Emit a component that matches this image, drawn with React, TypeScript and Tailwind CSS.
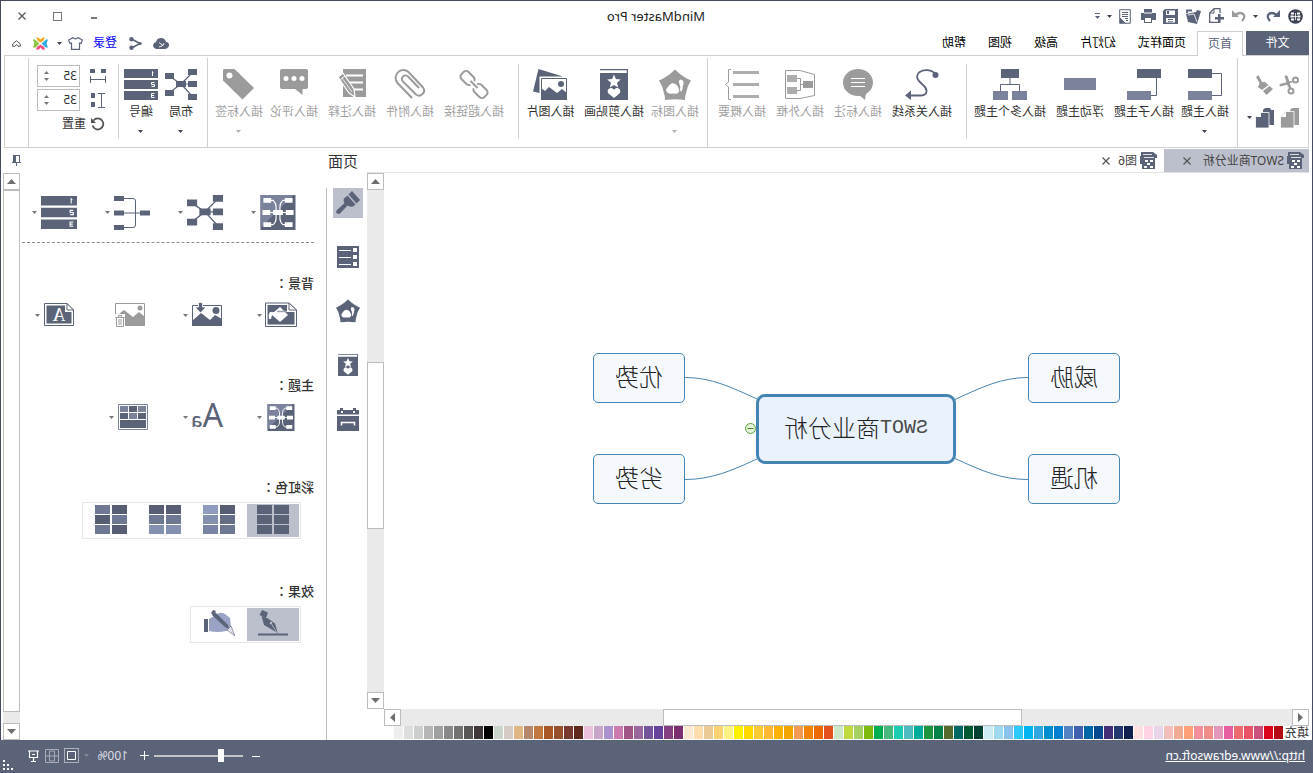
import React from "react";

const D = "#5b6378";
const M = "#7b829b";
const G = "#9b9b9b";

type IconProps = { w: number; h: number; children: React.ReactNode };

function Icon({ w, h, children }: IconProps) {
  return (
    <svg width={w} height={h} viewBox={`0 0 ${w} ${h}`} fill="none" className="shrink-0" aria-hidden="true">
      {children}
    </svg>
  );
}

function Caret({ color = "#3d4254", up = false }: { color?: string; up?: boolean }) {
  return (
    <Icon w={5} h={3}>
      <path d={up ? "M0 3L2.5 0L5 3Z" : "M0 0H5L2.5 3Z"} fill={color} />
    </Icon>
  );
}

/* ---------- ribbon drawings ---------- */

const TopicIcon = () => (
  <Icon w={34} h={31}>
    <path d="M10 4.5H.5V26.5H10" stroke={D} />
    <path d="M10 0h24v9H10z" fill={D} />
    <path d="M10 22h24v9H10z" fill={M} />
  </Icon>
);
const SubtopicIcon = () => (
  <Icon w={34} h={31}>
    <path d="M4.5 9V26.5H10" stroke={D} />
    <path d="M0 0h24v9H0z" fill={D} />
    <path d="M10 22h24v9H10z" fill={M} />
  </Icon>
);
const FloatingIcon = () => (
  <Icon w={32} h={31}>
    <path d="M0 9h32v12H0z" fill={M} />
  </Icon>
);
const MultiIcon = () => (
  <Icon w={34} h={31}>
    <path d="M17 9V15.5M7.5 22V15.5H26.5V22" stroke={D} />
    <path d="M8 0h18v9H8z" fill={D} />
    <path d="M0 22h15v9H0zM19 22h15v9H19z" fill={M} />
  </Icon>
);
const RelationIcon = () => (
  <Icon w={34} h={31}>
    <path d="M3 6C7 0 16 0 20 3.500C25 9 19 13 16 16C11 20 11 26 18 26.500H29" stroke={D} strokeWidth="1.800" />
    <circle cx="3.500" cy="6" r="3" fill={D} />
    <path d="M34 26.500L28 21.500V31Z" fill={D} />
  </Icon>
);
const CalloutIcon = () => (
  <Icon w={30} h={31}>
    <ellipse cx="15" cy="13.500" rx="15" ry="13.500" fill={G} />
    <path d="M7 24L8 31L15 25Z" fill={G} />
    <path d="M8 9.500H22M8 13.500H22M8 17.500H22" stroke="#fff" />
  </Icon>
);
const BoundaryIcon = () => (
  <Icon w={30} h={31}>
    <path d="M29.500 1.500H15L.5 5.500V26.500L15 29.500H29.500Z" stroke={G} />
    <path d="M12 15.500H15M18 9.500H14.500V21.500H18" stroke={G} />
    <path d="M2 12h10v7H2z" fill={G} />
    <path d="M18 6h10v7H18zM18 18h10v7H18z" fill="#adadad" />
  </Icon>
);
const SummaryIcon = () => (
  <Icon w={34} h={31}>
    <path d="M0 2h26v3H0zM0 14h26v3H0zM0 26h26v3H0z" fill="#adadad" />
    <path d="M28 .5H30.500V13L33.500 15.500L30.500 18V30.500H28" stroke={G} />
  </Icon>
);
function Badge({ size, color }: { size: number; color: string }) {
  return (
    <svg width={size} height={size} viewBox="0 0 32 31" fill="none" aria-hidden="true">
      <path d="M16 0L21 4.500Q26 8.500 32 11Q28.500 16 27.500 22Q26 26 26 30.500Q16 29 6 30.500Q6 26 4.500 22Q3.500 16 0 11Q6 8.500 11 4.500Z" fill={color} />
      <path d="M17 14C21 13 23 18 25 20C25 23 22 25 18 24C14 25 11 23 12 20C13 17 13 15 17 14Z" fill="#fff" />
      <path d="M10 10C13 10 12 14 11 16C10 18 12 21 10 22C7 21 9 17 8 16C7 14 7 11 10 10Z" fill="#fff" />
      <path d="M12 17L15 13M6 23L9 20" stroke={color} strokeWidth="1.500" />
    </svg>
  );
}
function Clipart({ w, h }: { w: number; h: number }) {
  return (
    <svg width={w} height={h} viewBox="0 0 28 31" fill="none" aria-hidden="true">
      <path d="M0 0H28V1.200H1.200V4H28V31H0Z" fill={D} />
      <path d="M14 5.500L15.900 10.100L20.800 10.500L17 13.700L18.200 18.500L14 15.900L9.800 18.500L11 13.700L7.200 10.500L12.100 10.100Z" fill="#fff" />
      <path d="M14 29L8.500 24.500C6.500 22 8.500 19 11 19C12.500 19 13.500 20 14 21C14.500 20 15.500 19 17 19C19.500 19 21.500 22 19.500 24.500Z" fill="#fff" />
    </svg>
  );
}
const PictureIcon = () => (
  <Icon w={34} h={31}>
    <path d="M28.500 0L4 7.500H27.500V24L34 22.500Z" fill={D} />
    <path d="M.5 9.500H25.500V30.500H.5Z" fill="#fff" stroke={D} />
    <circle cx="6" cy="15" r="3" fill={D} />
    <path d="M0 31V24L5 20L10 24L18 18L22 22L26 19V31Z" fill={D} />
  </Icon>
);
const LinkIcon = () => (
  <Icon w={30} h={31}>
    <g stroke={G} strokeWidth="2">
      <rect x="14.500" y="4" width="14" height="10" rx="3.500" transform="rotate(-45 21.500 9)" />
      <rect x="1.500" y="17" width="14" height="10" rx="3.500" transform="rotate(-45 8.500 22)" />
    </g>
    <path d="M11.500 19.500L18.500 12" stroke="#fff" strokeWidth="5" />
    <path d="M11.500 19L18.500 12" stroke={G} strokeWidth="2" />
  </Icon>
);
const ClipIcon = () => (
  <Icon w={32} h={31}>
    <path
      d="M14 30L28.500 15A7.800 7.800 0 0 0 17.500 4L3 19.500A5 5 0 0 0 10 26.500L23 13.500A3.500 3.500 0 0 0 18 8.500L7 20"
      stroke={G}
      strokeWidth="2"
      transform="translate(0 -1)"
    />
  </Icon>
);
const NoteIcon = () => (
  <Icon w={28} h={31}>
    <path d="M0 0h23v28H0z" fill={G} />
    <path d="M3 6.500H20M3 13.500H16M3 20.500H12" stroke="#fff" strokeWidth="2" />
    <path d="M23 4L28 8L17 24L11 28L12 20Z" fill={G} stroke="#fff" strokeWidth="1.200" />
    <path d="M21 7L25.500 10.500" stroke="#fff" />
    <path d="M24 9L14 23" stroke="#fff" strokeWidth=".8" />
  </Icon>
);
const CommentIcon = () => (
  <Icon w={28} h={31}>
    <path d="M2 0H26Q28 0 28 2V18Q28 20 26 20H13L5.500 26V20H2Q0 20 0 18V2Q0 0 2 0Z" fill={G} />
    <circle cx="6" cy="9.500" r="2.500" fill="#fff" />
    <circle cx="14" cy="9.500" r="2.500" fill="#fff" />
    <circle cx="22" cy="9.500" r="2.500" fill="#fff" />
  </Icon>
);
const TagIcon = () => (
  <Icon w={31} h={31}>
    <path d="M30 0H19.500L0 19L11.500 30.500L31 11.500V1Z" fill={G} />
    <circle cx="24.500" cy="6.500" r="3" fill="#fff" />
  </Icon>
);
function LayoutIcon({ size }: { size: number }) {
  return (
    <svg width={size} height={size} viewBox="0 0 32 32" fill="none" aria-hidden="true">
      <path d="M4 3L16 15L4 28M4 15H16L28 7M16 15L28 24" stroke={D} strokeWidth="1.200" />
      <path d="M0 0h9v6H0zM0 12h9v6H0zM0 25h9v6H0zM11 12h10v6H11zM23 4h9v6h-9zM23 21h9v6h-9z" fill={D} />
    </svg>
  );
}
function NumberIcon({ w, h }: { w: number; h: number }) {
  return (
    <svg width={w} height={h} viewBox="0 0 34 31" fill="none" aria-hidden="true">
      <path d="M0 0h34v9H0zM0 11h34v9H0zM0 22h34v9H0z" fill={D} />
      <path d="M4.500 3.500L5.500 2.500V7M3.500 13.500H6.500V15.500H3.500V17.500H6.500M3.500 24.500H6.500V28.500H3.500M4 26.500H6.500" stroke="#fff" />
    </svg>
  );
}

/* ---------- panel drawings ---------- */

function MapIcon({ w, h }: { w: number; h: number }) {
  return (
    <svg width={w} height={h} viewBox="0 0 36 36" fill="none" aria-hidden="true">
      <path d="M0 0H36V36H0Z" fill={D} />
      <path d="M2 0H36V34Z" fill={M} />
      <path d="M8 5.500H13Q16 8 16 12V24Q16 28 13 30.500H8M28 5.500H23Q20 8 20 12V24Q20 28 23 30.500H28M4 18H32" stroke="#fff" strokeWidth="1.200" />
      <path d="M3 3h8v5H3zM2 15.500h8v5H2zM3 28h8v5H3zM25 3h8v5h-8zM26 15.500h8v5h-8zM25 28h8v5h-8zM13 15.500h10v5H13z" fill="#fff" />
    </svg>
  );
}
const TreeIcon = () => (
  <Icon w={36} h={36}>
    <path d="M8 18H28M28 3.500H17Q14.500 3.500 14.500 6V30Q14.500 32.500 17 32.500H28" stroke={D} />
    <path d="M0 15.500h10v5H0zM26 1h10v5H26zM26 15.500h10v5H26zM26 30h10v5H26z" fill={D} />
  </Icon>
);
const FillIcon = () => (
  <Icon w={32} h={26}>
    <path d="M8 1H31.500V24.500H.5V8Z" stroke={D} fill="#fff" />
    <path d="M.5 8L8 1V8Z" fill="#fff" stroke={D} />
    <path d="M10 3H29.500V22.500H2.500V10H10Z" fill={D} />
    <path d="M17 5L23 10H27Q29 12 28 17L26 17L25 13L17 20L9 13Z" fill="#fff" />
    <path d="M10 9.500H20" stroke="#9aa1b3" strokeWidth="1.500" />
  </Icon>
);
const ImportPictureIcon = () => (
  <Icon w={30} h={26}>
    <path d="M.5 3.500H29.500V23.500H.5Z" stroke={D} />
    <circle cx="6" cy="8.500" r="3.500" fill={D} />
    <path d="M0 24V17L7 13L12 18L21 11L30 19V24Z" fill={D} />
    <path d="M19.500 .5H23.500V5H27L21.500 11L16 5H19.500Z" fill={D} stroke="#fff" strokeWidth=".8" />
  </Icon>
);
const RemovePictureIcon = () => (
  <Icon w={30} h={26}>
    <path d="M.5 1.500H29.500V23.500H.5Z" stroke={G} />
    <circle cx="5" cy="6" r="2.500" fill={G} />
    <path d="M0 24V15L6 10L12 15L21 8L30 15V24Z" fill={G} />
    <path d="M20 12H30V26H20Z" fill="#fff" />
    <path d="M20.500 15.500H29.500M23.500 15V13.500H26.500V15M21.500 16V24.500H28.500V16M24 17V23M26 17V23" stroke={G} />
  </Icon>
);
const WatermarkIcon = () => (
  <Icon w={30} h={26}>
    <path d="M7 1.500H29.500V23.500H.5V8Z" stroke={D} fill="#fff" />
    <path d="M.5 8L7 1.500V8Z" fill="#fff" stroke={D} />
    <path d="M9 3.500H27.500V21.500H2.500V10H9Z" fill={D} />
    <text x="15" y="19" textAnchor="middle" fontSize="18" fontFamily="Liberation Serif" fill="#fff">A</text>
  </Icon>
);
const TableIcon = () => (
  <Icon w={30} h={26}>
    <path d="M.5 .5H29.500V25.500H.5Z" stroke={M} />
    <path d="M2 2h8v6H2zM20 2h8v6h-8zM11 9h8v6h-8z" fill={M} />
    <path d="M11 2h8v6h-8zM2 9h8v6H2zM20 9h8v6h-8zM2 16h26v8H2z" fill={D} />
  </Icon>
);
const BrushIcon = () => (
  <Icon w={24} h={24}>
    <path d="M0 9L8 0L11.500 3.500L3.500 12.500Z" fill={D} />
    <path d="M4.500 13.500L12.500 4.500L16 7.500Q17 10 15.500 12L23.500 19.500Q25 23 20.500 23L12.500 14.500Q9 16.500 7 15.500Z" fill={D} />
  </Icon>
);
const OutlineIcon = () => (
  <Icon w={22} h={22}>
    <path d="M0 0h22v22H0z" fill={D} />
    <path d="M2 2h4v4H2zM2 9h4v4H2zM2 16h4v4H2z" fill="#fff" />
    <path d="M8 4.500H20M8 11.500H20M8 18.500H20" stroke="#fff" />
  </Icon>
);
const CalendarIcon = () => (
  <Icon w={22} h={23}>
    <path d="M0 2H22V6.500H0ZM0 8H22V23H0ZM3 0H6V3H3ZM16 0H19V3H16Z" fill={D} />
    <path d="M4.500 17.500V14.500H17.500V17.500" stroke="#fff" strokeWidth="1.500" />
    <path d="M4 3h2v2H4zM16 3h2v2h-2z" fill="#fff" />
  </Icon>
);
const PenIcon = () => (
  <Icon w={30} h={26}>
    <path d="M0 23.500H30V25.500H0Z" fill={D} />
    <path d="M20 2.500L26 0L28.500 5L22 8Z" fill={D} />
    <path d="M20 8.500L26.500 6L24 15L12 22L10 24L13 13.500Z" fill={D} />
    <path d="M11 23L17 13" stroke="#bcc0cc" strokeWidth=".8" />
    <circle cx="17" cy="13" r="1.200" fill="#bcc0cc" />
  </Icon>
);
const HandIcon = () => (
  <Icon w={32} h={27}>
    <path d="M27 9H31V22H27Z" fill={D} />
    <path d="M26 9V21Q18 23 9 21Q5 20 4 17L5 8L10 4Q15 1 19 5Z" fill="#9aa3c5" />
    <path d="M20 2L23 5L10 17L6 19L7 15Z" fill={D} />
    <path d="M19 1L22 0L24 3L22 5Z" fill={D} />
    <path d="M4 16L8 20L0 26Z" fill="#dfe2ec" stroke={D} strokeWidth=".6" />
  </Icon>
);

function Palette({ left, right }: { left: string[]; right: string[] }) {
  return (
    <Icon w={32} h={29}>
      {left.map((c, i) => <rect key={`l${i}`} x="0" y={i * 10} width="15" height="9" fill={c} />)}
      {right.map((c, i) => <rect key={`r${i}`} x="17" y={i * 10} width="15" height="9" fill={c} />)}
    </Icon>
  );
}

/* ---------- small building blocks ---------- */

type ToolProps = { label: string; width: string; icon: React.ReactNode; muted?: boolean; caret?: boolean };

function Tool({ label, width, icon, muted, caret }: ToolProps) {
  return (
    <button type="button" className={`${width} flex flex-col items-center pt-[13px] whitespace-nowrap ${muted ? "text-[#9f9f9f]" : "text-[#333]"}`}>
      <span className="flex h-[31px] items-start justify-center">{icon}</span>
      <span className="mt-1 h-4">{label}</span>
      {caret && <span className="mt-[10px]"><Caret color={muted ? "#b0b0b0" : "#3d4254"} /></span>}
    </button>
  );
}

const LongRule = () => <div className="mt-[2px] w-px shrink-0 bg-[#d0d0d0]" />;
const ShortRule = () => <div className="my-2 w-px shrink-0 bg-[#d0d0d0]" />;

function IconButton({ label, width, children }: { label: string; width: string; children: React.ReactNode }) {
  return (
    <button type="button" aria-label={label} className={`${width} flex h-6 shrink-0 items-center justify-center`}>
      {children}
    </button>
  );
}

function Spinner({ id, label, icon }: { id: string; label: string; icon: React.ReactNode }) {
  return (
    <div className="flex h-6 items-center gap-[10px]">
      <label htmlFor={id} aria-label={label}>{icon}</label>
      <div className="flex h-[22px] w-[43px] border border-[#bcbcbc]">
        <input id={id} defaultValue="35" className="w-6 min-w-0 bg-transparent pl-[2px] text-xs text-[#333] outline-none" />
        <div className="flex flex-1 flex-col items-center justify-evenly">
          <button type="button" aria-label="+"><Caret color="#777" up /></button>
          <button type="button" aria-label="-"><Caret color="#777" /></button>
        </div>
      </div>
    </div>
  );
}

function ScrollButton({ dir }: { dir: "up" | "down" | "left" | "right" }) {
  const shapes = { up: "M0 7L4.500 2L9 7Z", down: "M0 2H9L4.500 7Z", left: "M2 4.500L7 0V9Z", right: "M2 0L7 4.500L2 9Z" };
  return (
    <button type="button" aria-label={dir} className="flex size-[17px] shrink-0 items-center justify-center border border-[#bcbcbc] bg-white">
      <Icon w={9} h={9}><path d={shapes[dir]} fill="#6e6e6e" /></Icon>
    </button>
  );
}

function Option({ label, icon, width, caret = true }: { label: string; icon: React.ReactNode; width: string; caret?: boolean }) {
  return (
    <button type="button" aria-label={label} className="flex items-center">
      <span className={`${width} flex justify-center`}>{icon}</span>
      {caret && <span className="ml-[3px]"><Caret color="#777" /></span>}
    </button>
  );
}

const DocIcon = () => (
  <Icon w={17} h={17}>
    <path d="M4 0H16V4H17V12H15V17H2V6H0V3Z" fill={D} />
    <path d="M5 2.500H14M3 5.500H13" stroke="#fff" strokeWidth=".8" />
    <path d="M4 8h3v2H4zM9 8h3v2H9zM7 11h3v2H7zM4 14h3v2H4zM10 14h3v2h-3z" fill="#fff" />
  </Icon>
);
const CloseIcon = () => (
  <Icon w={8} h={8}>
    <path d="M.5 .5L7.500 7.500M7.500 .5L.5 7.500" stroke="#555" strokeWidth="1.300" />
  </Icon>
);

const SWATCHES = (
  "b50913 d9061c c9517b e95365 ec6b6f e85f9f e398b9 ef8e88 f1909b ffa078 f0ab94 f5bfbc e9d4e9 ffd3e5 fee0e3 " +
  "0e214e 22386f 432e78 064a8f 0068a6 3f61af 5483c3 0080ce 008dcd 2ea7e0 00b4ef 2dc9f9 8bc2ec 9fd9f0 cdebf5 " +
  "004131 005a31 006863 566a2c 008247 1d953f 00ad9d 4fbcc0 1bceb3 47b97d 00b050 7dba0c a4d162 bfd93f cce8c8 " +
  "e4511d ed6a00 f18200 f39a53 f2a500 ffb300 ffb933 fccb33 ffd900 fff000 fdf385 fdd371 eacb98 ffdcab fde8d2 " +
  "7b2f71 843e82 66429a 74559b 9a669e a05787 cc7bb1 ab92ce c9a6c9 ebc1dc " +
  "5e291a 763b2e 96502b aa5727 c1783e b6876b dfb785 d4cbc5 cad5cc " +
  "000000 3e3838 595656 727271 898989 9fa0a0 b5b6b5 cdcece dcdddd eeeeee"
).split(" ");

/* ---------- page sections ---------- */

function TitleBar() {
  return (
    <header className="flex h-[30px] items-center">
      <div className="flex flex-1 pl-1">
        <IconButton label="MindMaster" width="w-6">
          <Icon w={15} h={15}>
            <circle cx="7.500" cy="7.500" r="7.300" fill="#3d4254" />
            <path d="M3 3.500h3v2H3zM2.500 6.500h3v2h-3zM3 9.500h3v2H3zM9 3.500h3v2H9zM9.500 6.500h3v2h-3zM9 9.500h3v2H9z" fill="#fff" />
            <path d="M5 7.500H10M7.500 4V11" stroke="#fff" strokeWidth=".8" />
          </Icon>
        </IconButton>
        <IconButton label="撤销" width="w-[22px]">
          <Icon w={14} h={12}><path d="M3 5Q9 1 12 5Q13 8 10 11" stroke={D} strokeWidth="2.200" /><path d="M0 0V7H7Z" fill={D} /></Icon>
        </IconButton>
        <IconButton label="撤销列表" width="w-3"><Caret /></IconButton>
        <IconButton label="重做" width="w-[22px]">
          <Icon w={14} h={12}><path d="M11 5Q5 1 2 5Q1 8 4 11" stroke={G} strokeWidth="2.200" /><path d="M14 0V7H7Z" fill={G} /></Icon>
        </IconButton>
        <IconButton label="新建" width="w-6">
          <Icon w={16} h={16}>
            <path d="M4 5V.7H10L14.300 5V14.300H5" stroke={D} strokeWidth="1.300" />
            <path d="M10 1V5H14" stroke={D} />
            <path d="M3.500 6H6V9H9V11.500H6V15H3.500V11.500H0V9H3.500Z" fill={D} />
          </Icon>
        </IconButton>
        <IconButton label="打开" width="w-[22px]">
          <Icon w={16} h={15}><path d="M0 2L4 1L5 3L15 5L13 13L4 15Z" fill={D} /><path d="M9 1.500H14V4" stroke={D} strokeWidth="1.800" /><path d="M4 13L7 5L13 6" stroke="#fff" strokeWidth=".8" /></Icon>
        </IconButton>
        <IconButton label="保存" width="w-[22px]">
          <Icon w={15} h={15}><path d="M0 0H13L15 2V15H0Z" fill={D} /><path d="M3 1.500H12V6H3ZM3 9H12V13.500H3Z" fill="#fff" /><path d="M9 2h2v3H9zM5 10h5v1H5zM5 12h5v.8H5z" fill={D} /></Icon>
        </IconButton>
        <IconButton label="打印" width="w-6">
          <Icon w={16} h={14}><path d="M4 0H12V4H15V11H12V14H4V11H0V4H4Z" fill={D} /><path d="M5 9h6v4H5zM4 3.500h8v1H4z" fill="#fff" /></Icon>
        </IconButton>
        <IconButton label="预览" width="w-[22px]">
          <Icon w={12} h={15}><path d="M.7 .7H11.300V14.300H.7Z" stroke={D} /><path d="M3 3.500H9M3 5.500H9M3 7.500H9M3 9.500H6M3 11.500H5" stroke={D} /><path d="M5.500 14L11 8.500V14Z" fill={D} /></Icon>
        </IconButton>
        <IconButton label="更多" width="w-2"><Caret /></IconButton>
        <IconButton label="自定义" width="w-4">
          <Icon w={5} h={6}><path d="M0 .5H5" stroke={D} /><path d="M0 3H5L2.500 6Z" fill={D} /></Icon>
        </IconButton>
      </div>
      <h1 className="pt-[2px] text-[13px] text-[#222]">MindMaster Pro</h1>
      <div className="flex flex-1 justify-end pr-[3px]">
        <IconButton label="最小化" width="w-9"><span className="mt-1 h-[2px] w-[6px] bg-[#777]" /></IconButton>
        <IconButton label="最大化" width="w-9"><span className="size-[9px] border border-[#777]" /></IconButton>
        <IconButton label="关闭" width="w-9"><CloseIcon /></IconButton>
      </div>
    </header>
  );
}

function TabBar() {
  return (
    <nav className="flex h-[25px] pl-[3px] leading-6 text-black">
      <button type="button" className="h-6 w-[63px] bg-[#5b6378] text-white">文件</button>
      <button type="button" className="relative z-10 ml-[3px] h-[25px] border border-b-0 border-[#d0d0d0] bg-white px-[10px] text-[#5b6378]">首页</button>
      {["页面样式", "幻灯片", "高级", "视图", "帮助"].map((t) => (
        <button type="button" key={t} className="h-6 px-[11px]">{t}</button>
      ))}
      <div className="ml-auto flex pr-[6px]">
        <IconButton label="云" width="w-6">
          <Icon w={16} h={11}>
            <path d="M4 11Q0 10 0 7Q0 4 3 4Q4 0 8 0Q12 0 13 4Q16 5 16 8Q15 11 12 11Z" fill={D} />
            <path d="M6 7.500L10 4.500M6 7.500L10 9M6 7.500L5 5" stroke="#fff" strokeWidth=".9" />
          </Icon>
        </IconButton>
        <IconButton label="分享" width="w-[26px]">
          <Icon w={13} h={13}>
            <path d="M10.500 2L2 6.500L10.500 11" stroke={D} strokeWidth="1.600" />
            <circle cx="10.500" cy="2.200" r="2.200" fill={D} /><circle cx="10.500" cy="10.800" r="2.200" fill={D} /><circle cx="1.800" cy="6.500" r="1.500" fill={D} />
          </Icon>
        </IconButton>
        <a href="#login" className="h-6 w-9 text-center text-[#0000ff]">登录</a>
        <IconButton label="皮肤" width="w-[22px]">
          <Icon w={15} h={13}><path d="M5 .6Q7.500 3 10 .6L14.400 3L13 6.500L11.500 6V12.400H3.500V6L2 6.500L.6 3Z" stroke={D} strokeWidth="1.200" /></Icon>
        </IconButton>
        <IconButton label="皮肤列表" width="w-[10px]"><Caret /></IconButton>
        <IconButton label="社区" width="w-7">
          <Icon w={15} h={15}>
            <path d="M3 1.500Q6 1 7.500 3.500Q9 1 12 1.500Q11 5 7.500 6.500Q4 5 3 1.500Z" fill="#f7a823" />
            <path d="M3 13.500Q6 14.500 7.500 11.500Q9 14.500 12 13.500Q11 10 7.500 8.500Q4 10 3 13.500Z" fill="#f4517c" />
            <path d="M0 4Q1 2.500 3 4.500Q5 6.500 6.500 7.500Q5 9 3 11Q1 12.500 0 11Q2.500 7.500 0 4Z" fill="#35aee2" />
            <path d="M15 4Q14 2.500 12 4.500Q10 6.500 8.500 7.500Q10 9 12 11Q14 12.500 15 11Q12.500 7.500 15 4Z" fill="#8bc53f" />
          </Icon>
        </IconButton>
        <IconButton label="收起" width="w-5">
          <Icon w={9} h={7}><path d="M.7 4L4.500 .7L8.300 4V6.300H6L4.500 4.500L3 6.300H.7Z" stroke="#555" /></Icon>
        </IconButton>
      </div>
    </nav>
  );
}

function Ribbon() {
  return (
    <section className="mx-[3px] -mt-px flex h-[93px] shrink-0 overflow-hidden border border-[#d0d0d0]">
      <div className="flex w-[70px] shrink-0 flex-wrap content-start pt-3 pl-[6px]">
        <button type="button" aria-label="剪切" className="flex h-[33px] w-[25px] items-center justify-center">
          <Icon w={20} h={20}>
            <circle cx="3.500" cy="5" r="2.500" stroke={G} strokeWidth="2" /><circle cx="8" cy="16" r="2.500" stroke={G} strokeWidth="2" />
            <path d="M5.500 6L19 9.500V11L11 9Z" fill={G} stroke={G} /><path d="M8 13.500L12 1H14L10.500 12Z" fill={G} stroke={G} />
          </Icon>
        </button>
        <button type="button" aria-label="格式刷" className="flex h-[33px] w-[25px] items-center justify-center">
          <Icon w={18} h={20}><path d="M14.500 0L17 2L13.500 8L15 12L11 15L4.500 10L8 7L11 7Z" fill={G} /><path d="M3.500 11L10 16L6.500 20L0 14Z" fill={G} /></Icon>
        </button>
        <button type="button" aria-label="复制" className="flex h-[33px] w-[25px] items-center justify-center">
          <Icon w={19} h={20}><path d="M0 0H7L9 2V17H0Z" fill={G} /><path d="M5 3.500H13L18.500 9V20H5Z" fill={G} stroke="#fff" strokeWidth=".8" /><path d="M13 4V9H18Z" fill="#fff" /></Icon>
        </button>
        <button type="button" aria-label="粘贴" className="flex h-[33px] w-[38px] items-center gap-[3px] pl-[3px]">
          <Icon w={19} h={20}><path d="M0 2H3L4 0H9L11 2V17H0Z" fill={D} /><path d="M5 4.500H13L18.500 9V20H5Z" fill={D} stroke="#fff" strokeWidth=".8" /><path d="M13 4V9H18Z" fill="#fff" /></Icon>
          <Caret />
        </button>
      </div>
      <LongRule />
      <div className="flex pr-[5px] pl-[3px]">
        <Tool label="插入主题" width="w-[58px]" icon={<TopicIcon />} caret />
        <Tool label="插入子主题" width="w-16" icon={<SubtopicIcon />} />
        <Tool label="浮动主题" width="w-16" icon={<FloatingIcon />} />
        <Tool label="插入多个主题" width="w-[76px]" icon={<MultiIcon />} />
      </div>
      <ShortRule />
      <div className="flex pr-[5px] pl-[9px]">
        <Tool label="插入关系线" width="w-[70px]" icon={<RelationIcon />} />
        <Tool label="插入标注" width="w-[58px]" icon={<CalloutIcon />} muted />
        <Tool label="插入外框" width="w-[58px]" icon={<BoundaryIcon />} muted />
        <Tool label="插入概要" width="w-[58px]" icon={<SummaryIcon />} muted />
      </div>
      <LongRule />
      <div className="flex pl-[3px]">
        <Tool label="插入图标" width="w-[58px]" icon={<Badge size={32} color={G} />} muted caret />
        <Tool label="插入剪贴画" width="w-16" icon={<Clipart w={28} h={31} />} />
        <Tool label="插入图片" width="w-[63px]" icon={<PictureIcon />} />
      </div>
      <ShortRule />
      <div className="flex pr-[5px] pl-[9px]">
        <Tool label="插入超链接" width="w-[70px]" icon={<LinkIcon />} muted />
        <Tool label="插入附件" width="w-[58px]" icon={<ClipIcon />} muted />
        <Tool label="插入注释" width="w-[58px]" icon={<NoteIcon />} muted />
        <Tool label="插入评论" width="w-[58px]" icon={<CommentIcon />} muted />
        <Tool label="插入标签" width="w-[52px]" icon={<TagIcon />} muted caret />
      </div>
      <LongRule />
      <div className="flex pr-[2px] pl-[6px]">
        <Tool label="布局" width="w-10" icon={<LayoutIcon size={32} />} caret />
        <Tool label="编号" width="w-10" icon={<NumberIcon w={34} h={31} />} caret />
      </div>
      <ShortRule />
      <div className="w-[89px] shrink-0 pt-2 pl-3">
        <Spinner id="h-gap" label="水平间距" icon={<Icon w={16} h={15}><path d="M0 0h5v4H0zM11 0h5v4h-5z" fill={D} /><path d="M.5 7V14M15.500 7V14M0 10.500H16" stroke={D} /></Icon>} />
        <Spinner id="v-gap" label="垂直间距" icon={<Icon w={16} h={15}><path d="M11 0h4v5h-4zM11 9h4v5h-4z" fill={D} /><path d="M1 .5H8M1 14.500H8M4.500 0V14" stroke={D} /></Icon>} />
        <button type="button" className="flex h-6 items-center gap-[5px] pl-px text-[#333]">
          <Icon w={14} h={14}><path d="M11.500 3.500A5.500 5.500 0 1 0 12.500 8.500" stroke="#555" strokeWidth="1.800" /><path d="M14 1V6H9Z" fill="#555" /></Icon>
          重置
        </button>
      </div>
      <LongRule />
    </section>
  );
}

function MindNode({ place, children }: { place: string; children: React.ReactNode }) {
  return (
    <div className={`${place} absolute flex h-[50px] w-[92px] items-center justify-center rounded-[5px] border border-[#4686b4] bg-[#f5f9fe] pb-[2px] text-2xl font-light text-[#222]`}>
      {children}
    </div>
  );
}

function Workspace() {
  return (
    <main className="flex min-w-0 flex-1 flex-col">
      <div className="mt-px flex h-[24px] border-b border-[#e3e3e3] text-[#444]">
        <div className="flex w-[145px] items-center bg-[#bcc0cc] pl-[5px]">
          <DocIcon />
          <span className="ml-[3px] w-[86px] whitespace-nowrap">SWOT商业分析</span>
          <button type="button" aria-label="关闭 SWOT商业分析" className="ml-[7px]"><CloseIcon /></button>
        </div>
        <div className="flex items-center pl-[7px]">
          <DocIcon />
          <span className="ml-[3px] w-[18px] whitespace-nowrap">图6</span>
          <button type="button" aria-label="关闭 图6" className="ml-[9px]"><CloseIcon /></button>
        </div>
      </div>
      <div className="flex min-h-0 flex-1">
        <div className="flex-1 overflow-hidden pt-[180px] pl-[189px]">
          <div className="relative h-[151px] w-[527px]">
            <svg width="527" height="151" className="absolute inset-0" fill="none" stroke="#4686b4" aria-hidden="true">
              <path d="M92 24.500C118 24.500 138 34 165 46.500M92 126.500C118 126.500 138 118 165 105.500" />
              <path d="M435 24.500C409 24.500 389 34 362 46.500M435 126.500C409 126.500 389 118 362 105.500" />
            </svg>
            <MindNode place="top-0 left-0">威胁</MindNode>
            <MindNode place="bottom-0 left-0">机遇</MindNode>
            <MindNode place="top-0 right-0">优势</MindNode>
            <MindNode place="right-0 bottom-0">劣势</MindNode>
            <div className="absolute top-[41px] left-[164px] flex h-[70px] w-[200px] items-center justify-center rounded-[9px] border-[3px] border-[#4384b3] bg-[#e9f2fc] pb-[2px] text-2xl font-light text-[#222]">
              <span className="font-['Liberation_Mono',monospace] text-xl font-normal text-[#4a4a4a]">SWOT</span>商业分析
            </div>
            <button type="button" aria-label="折叠" className="absolute top-[70px] left-[364px]">
              <Icon w={11} h={11}><circle cx="5.500" cy="5.500" r="5" fill="#e6f2dc" stroke="#5da33a" /><path d="M2.500 5.500H8.500" stroke="#3f8f1c" /></Icon>
            </button>
          </div>
        </div>
        <div className="flex w-[17px] flex-col bg-[#eaeaea]">
          <ScrollButton dir="up" />
          <div className="flex-[173]" />
          <div className="flex-[165] border border-[#bcbcbc] bg-white" />
          <div className="flex-[164]" />
          <ScrollButton dir="down" />
        </div>
      </div>
      <div className="mr-[17px] flex h-[17px] bg-[#eaeaea]">
        <ScrollButton dir="left" />
        <div className="flex-[270]" />
        <div className="flex-[357] border border-[#bcbcbc] bg-white" />
        <div className="flex-[262]" />
        <ScrollButton dir="right" />
      </div>
      <div className="flex h-[14px] gap-px">
        <span className="w-[25px] shrink-0 leading-[14px] whitespace-nowrap text-[#333]">填充</span>
        <div className="flex min-w-0 gap-px overflow-hidden">
          {SWATCHES.map((c, i) => (
            <button type="button" key={i} aria-label={`#${c}`} className="h-[13px] w-[9px] shrink-0" style={{ backgroundColor: `#${c}` }} />
          ))}
        </div>
      </div>
    </main>
  );
}

const Heading = ({ children }: { children: React.ReactNode }) => (
  <h2 className="pl-3 text-[13px] leading-5 font-medium text-[#333]">
    {children}
    <span className="font-['Noto_Sans_CJK_TC']" lang="zh-Hant">：</span>
  </h2>
);

function Panel() {
  const dark = "#575e73", mid = "#6f7893", pale = "#8490b0";
  return (
    <aside className="flex w-[364px] shrink-0 flex-col">
      <div className="flex h-[25px] items-center justify-between pr-[9px] pl-[9px]">
        <span className="text-[15px] leading-6 text-[#333]">页面</span>
        <button type="button" aria-label="固定">
          <Icon w={9} h={11}><path d="M1.500 0V7M7.500 0V7M1 .5H8M0 7.500H9M4.500 8V11" stroke={D} /><path d="M5 1h2v6H5z" fill={D} /></Icon>
        </button>
      </div>
      <div className="flex min-h-0 flex-1">
        <div className="mt-[15px] flex w-[41px] shrink-0 flex-col items-center gap-[24px] border-r border-[#bcbcbc] pr-[2px]">
          {[
            ["样式", <BrushIcon />],
            ["大纲", <OutlineIcon />],
            ["图标", <Badge size={24} color={D} />],
            ["剪贴画", <Clipart w={20} h={24} />],
            ["任务", <CalendarIcon />],
          ].map(([name, icon], i) => (
            <button type="button" key={i} aria-label={name as string} className={`flex size-[30px] items-center justify-center ${i === 0 ? "bg-[#bcc0cc]" : ""}`}>
              {icon}
            </button>
          ))}
        </div>
        <div className="min-w-0 flex-1 overflow-hidden">
          <div className="mr-[2px] ml-3 flex h-[70px] items-center gap-[27px] border-b border-dashed border-[#8c8c8c] pt-[10px] pl-[17px]">
            <Option label="导图" width="w-[38px]" icon={<MapIcon w={36} h={35} />} />
            <Option label="放射" width="w-[38px]" icon={<LayoutIcon size={36} />} />
            <Option label="树形" width="w-[38px]" icon={<TreeIcon />} />
            <Option label="编号" width="w-[38px]" icon={<NumberIcon w={36} h={35} />} />
          </div>
          <div className="h-[30px]" />
          <Heading>背景</Heading>
          <div className="mt-[7px] flex h-[30px] gap-[34px] pl-[29px]">
            <Option label="背景颜色" width="w-8" icon={<FillIcon />} />
            <Option label="背景图片" width="w-8" icon={<ImportPictureIcon />} />
            <div className="flex w-10 pl-[3px]"><Option label="删除图片" width="w-8" icon={<RemovePictureIcon />} caret={false} /></div>
            <Option label="水印" width="w-8" icon={<WatermarkIcon />} />
          </div>
          <div className="h-[45px]" />
          <Heading>主题</Heading>
          <div className="mt-[7px] flex h-[30px] gap-[34px] pl-[29px]">
            <Option label="主题样式" width="w-8" icon={<MapIcon w={28} h={27} />} />
            <Option
              label="主题字体"
              width="w-8"
              icon={<span className="flex items-baseline font-['Noto_Sans'] text-[20px] leading-[30px] font-medium text-[#5b6378]"><span className="text-[32px] font-normal">A</span>a</span>}
            />
            <Option label="主题颜色" width="w-8" icon={<TableIcon />} />
          </div>
          <div className="h-[45px]" />
          <Heading>彩虹色</Heading>
          <div className="mt-[5px] ml-[25px] flex h-[37px] w-[219px] gap-[2px] border border-[#e6e6e6] p-px">
            {[
              [[D, D, D], [D, D, D]],
              [[dark, "#666d87", mid], ["#8f9cc0", pale, "#7a84a4"]],
              [[dark, mid, pale], [dark, mid, pale]],
              [[dark, mid, dark], [mid, dark, mid]],
            ].map(([l, r], i) => (
              <button type="button" key={i} aria-label={`彩虹色 ${i + 1}`} className={`flex h-[33px] w-[52px] justify-center pt-px ${i === 0 ? "bg-[#bcc0cc]" : ""}`}>
                <Palette left={l} right={r} />
              </button>
            ))}
          </div>
          <div className="h-[42px]" />
          <Heading>效果</Heading>
          <div className="mt-[5px] ml-[25px] flex h-[37px] w-[111px] gap-[2px] border border-[#e6e6e6] p-px">
            <button type="button" aria-label="钢笔" className="flex h-[33px] w-[52px] justify-center bg-[#bcc0cc] pt-[2px]"><PenIcon /></button>
            <button type="button" aria-label="手绘" className="flex h-[33px] w-[52px] justify-center pt-[2px]"><HandIcon /></button>
          </div>
        </div>
        <div className="flex w-[17px] shrink-0 flex-col bg-[#eaeaea]">
          <ScrollButton dir="up" />
          <div className="flex-[522] border border-[#bcbcbc] bg-white" />
          <div className="flex-[11]" />
          <ScrollButton dir="down" />
        </div>
      </div>
    </aside>
  );
}

function StatusBar() {
  return (
    <footer className="relative flex h-[33px] shrink-0 items-center bg-[#5b6378] pb-[2px] pl-2 text-white">
      <a href="http://www.edrawsoft.cn" className="text-xs underline">http://www.edrawsoft.cn</a>
      <div className="ml-auto flex items-center pr-6">
        <button type="button" aria-label="缩小" className="flex w-5 justify-center"><Icon w={8} h={8}><path d="M0 4.500H8" stroke="#fff" /></Icon></button>
        <input
          type="range"
          aria-label="缩放"
          defaultValue={23}
          className="mr-px ml-[3px] h-[13px] w-[89px] appearance-none bg-[linear-gradient(#c4c4c4,#c4c4c4)] bg-[length:100%_2px] bg-center bg-no-repeat [&::-webkit-slider-thumb]:h-[13px] [&::-webkit-slider-thumb]:w-[6px] [&::-webkit-slider-thumb]:appearance-none [&::-webkit-slider-thumb]:bg-white"
        />
        <button type="button" aria-label="放大" className="flex w-4 justify-center"><Icon w={9} h={9}><path d="M0 4.500H9M4.500 0V9" stroke="#fff" /></Icon></button>
        <span className="ml-[9px] w-[35px] text-xs text-[#dcdee4]">100%</span>
        <button type="button" aria-label="缩放列表" className="flex w-3 justify-center"><Caret color="#858a96" /></button>
        <button type="button" aria-label="适合页面" className="flex w-[19px] justify-center"><Icon w={15} h={15}><path d="M.5 .5H14.500V14.500H.5Z" stroke="#fff" strokeDasharray="1 1" /><path d="M3.500 3.500H11.500V11.500H3.500Z" stroke="#fff" /></Icon></button>
        <button type="button" aria-label="适合宽度" className="flex w-[19px] justify-center"><Icon w={14} h={14}><path d="M.5 .5H13.500V13.500H.5ZM4.500 2V12H9.500V2ZM0 7H14" stroke="#a7abb6" /></Icon></button>
        <button type="button" aria-label="演示" className="flex w-[19px] justify-center"><Icon w={11} h={12}><path d="M0 1H11M1.500 1V7.500H9.500V1M4 4.500H7M5.500 8V11M3 11.500H8" stroke="#fff" strokeWidth="1.200" /></Icon></button>
      </div>
      <div className="absolute right-[3px] bottom-[3px]">
        <Icon w={10} h={10}><path d="M8 0h2v2H8zM8 4h2v2H8zM4 4h2v2H4zM8 8h2v2H8zM4 8h2v2H4zM0 8h2v2H0z" fill="#fff" /></Icon>
      </div>
    </footer>
  );
}

export default function App() {
  return (
    <div className="flex h-screen min-h-[700px] -scale-x-100 flex-col overflow-hidden bg-white font-['Noto_Sans','Noto_Sans_CJK_SC',sans-serif] text-xs">
      <div className="flex min-h-0 flex-1 flex-col border-x border-t border-[#454a60]">
        <TitleBar />
        <TabBar />
        <Ribbon />
        <div className="flex min-h-0 flex-1 pr-[2px] pl-[3px]">
          <Workspace />
          <Panel />
        </div>
      </div>
      <StatusBar />
    </div>
  );
}
